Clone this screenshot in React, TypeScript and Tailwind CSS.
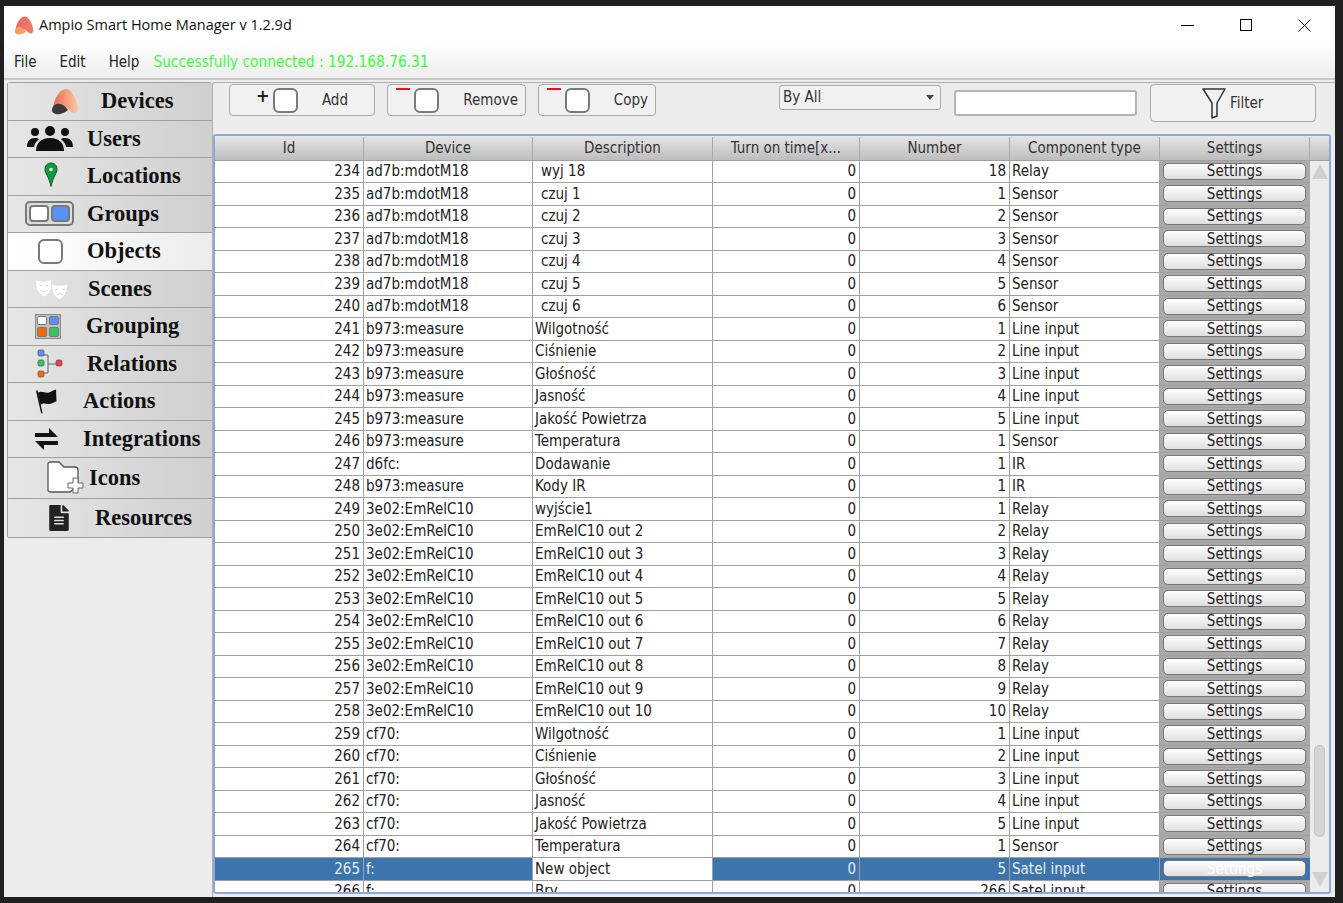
import { FaFileAlt } from "react-icons/fa";

type Row = { id: number; device: string; desc: string; num: number; type: string };

const mk = (id: number, device: string, desc: string, num: number, type: string): Row => ({ id, device, desc, num, type });

const rows: Row[] = [
  mk(234, "ad7b:mdotM18", " wyj 18", 18, "Relay"),
  mk(235, "ad7b:mdotM18", " czuj 1", 1, "Sensor"),
  mk(236, "ad7b:mdotM18", " czuj 2", 2, "Sensor"),
  mk(237, "ad7b:mdotM18", " czuj 3", 3, "Sensor"),
  mk(238, "ad7b:mdotM18", " czuj 4", 4, "Sensor"),
  mk(239, "ad7b:mdotM18", " czuj 5", 5, "Sensor"),
  mk(240, "ad7b:mdotM18", " czuj 6", 6, "Sensor"),
  mk(241, "b973:measure", "Wilgotność", 1, "Line input"),
  mk(242, "b973:measure", "Ciśnienie", 2, "Line input"),
  mk(243, "b973:measure", "Głośność", 3, "Line input"),
  mk(244, "b973:measure", "Jasność", 4, "Line input"),
  mk(245, "b973:measure", "Jakość Powietrza", 5, "Line input"),
  mk(246, "b973:measure", "Temperatura", 1, "Sensor"),
  mk(247, "d6fc:", "Dodawanie", 1, "IR"),
  mk(248, "b973:measure", "Kody IR", 1, "IR"),
  mk(249, "3e02:EmRelC10", "wyjście1", 1, "Relay"),
  mk(250, "3e02:EmRelC10", "EmRelC10 out 2", 2, "Relay"),
  mk(251, "3e02:EmRelC10", "EmRelC10 out 3", 3, "Relay"),
  mk(252, "3e02:EmRelC10", "EmRelC10 out 4", 4, "Relay"),
  mk(253, "3e02:EmRelC10", "EmRelC10 out 5", 5, "Relay"),
  mk(254, "3e02:EmRelC10", "EmRelC10 out 6", 6, "Relay"),
  mk(255, "3e02:EmRelC10", "EmRelC10 out 7", 7, "Relay"),
  mk(256, "3e02:EmRelC10", "EmRelC10 out 8", 8, "Relay"),
  mk(257, "3e02:EmRelC10", "EmRelC10 out 9", 9, "Relay"),
  mk(258, "3e02:EmRelC10", "EmRelC10 out 10", 10, "Relay"),
  mk(259, "cf70:", "Wilgotność", 1, "Line input"),
  mk(260, "cf70:", "Ciśnienie", 2, "Line input"),
  mk(261, "cf70:", "Głośność", 3, "Line input"),
  mk(262, "cf70:", "Jasność", 4, "Line input"),
  mk(263, "cf70:", "Jakość Powietrza", 5, "Line input"),
  mk(264, "cf70:", "Temperatura", 1, "Sensor"),
  mk(265, "f:", "New object", 5, "Satel input"),
  mk(266, "f:", "Bry", 266, "Satel input"),
];

const AmpioLogo = ({ size, dark }: { size: number; dark?: boolean }) => (
  <svg width={size} height={size} viewBox="0 0 28 28">
    <defs>
      <linearGradient id={dark ? "lgA" : "lgB"} x1="0" x2="1" y1="0" y2="0">
        <stop offset="0" stopColor={dark ? "#ea6a55" : "#ee6a5c"} />
        <stop offset="1" stopColor={dark ? "#fbc9a0" : "#ef7a6c"} />
      </linearGradient>
    </defs>
    <path d="M2 22C3 11 9 2 15 2c6 0 11 11 12 19 .4 4-3 6-6 4-3-2-6-6-10-6-4 0-8 7-9 3z" fill={dark ? "url(#lgA)" : "url(#lgB)"} />
    <path d="M1 23c0-4 4-7 8-6 3 .6 6 3 8 6-2 2-5 3-8 4-4 1-8-1-8-4z" fill={dark ? "#3a3a3c" : "#f6a25e"} />
  </svg>
);

const Square = () => (
  <span className="block w-[25px] h-[25px] bg-white border-2 border-[#77797b] rounded-[6px] shrink-0" />
);

const UsersIcon = () => (
  <svg width="46" height="25" viewBox="0 0 46 25">
    <circle cx="8" cy="6" r="4" fill="#111" />
    <circle cx="23" cy="5" r="5" fill="#111" />
    <circle cx="38" cy="6" r="4" fill="#111" />
    <path d="M0 21c0-6 3-9 8-9 2 0 3 .5 4 1.300-3 2-4.500 4.700-5 7.700z" fill="#111" />
    <path d="M46 21c0-6-3-9-8-9-2 0-3 .5-4 1.300 3 2 4.500 4.700 5 7.700z" fill="#111" />
    <path d="M9 25c0-8 5-13 14-13s14 5 14 13z" fill="#111" />
  </svg>
);

const Pin = () => (
  <svg width="14" height="28" viewBox="0 0 14 28">
    <path d="M7 1C3 1 1 4 1 7.500c0 4 4 7 6 17 2-10 6-13 6-17C13 4 11 1 7 1z" fill="#129a3c" stroke="#0b5a24" strokeWidth="1" />
    <circle cx="7" cy="7.500" r="1.800" fill="#e8f5ea" />
  </svg>
);

const GroupsIcon = () => (
  <span className="flex gap-[2px] w-[49px] h-[25px] p-[2px] bg-[#dcdcdc] border-2 border-[#77797b] rounded-[5px]">
    <span className="flex-1 bg-white border-2 border-[#77797b] rounded-[4px]" />
    <span className="flex-1 bg-[#5b8ff9] border-2 border-[#77797b] rounded-[4px]" />
  </span>
);

const MasksIcon = () => (
  <svg width="31" height="20" viewBox="0 0 31 20">
    <path d="M0 1.500c4 1.500 10 1.500 15 0 .5 6 0 13-7 16C2 15 0 8 0 1.500z" fill="#fff" />
    <path d="M16 6c4 1 10 1 15 0 0 6-2 11-7 14-6-2-8-8-8-14z" fill="#fff" />
    <path d="M3.500 6.500l3 .5M9 7l3-.5M4.500 11c2 2.500 4 2.500 6 0" fill="none" stroke="#d8d8d8" strokeWidth="1.200" />
    <path d="M19 10.500l3 .5M26 11l3-.5M21 16c2-2 4-2 6 0" fill="none" stroke="#d8d8d8" strokeWidth="1.200" />
  </svg>
);

const GroupingIcon = () => (
  <span className="grid grid-cols-2 gap-[2px] w-[26px] h-[25px] p-[1px] bg-[#c0c0c0] border border-[#8a8a8a]">
    <span className="bg-white border border-[#777] rounded-[2px]" />
    <span className="bg-[#5b8ff9] border border-[#777] rounded-[2px]" />
    <span className="bg-[#f26a0c] border border-[#777] rounded-[2px]" />
    <span className="bg-[#2fc765] border border-[#777] rounded-[2px]" />
  </span>
);

const RelationsIcon = () => (
  <svg width="26" height="30" viewBox="0 0 26 30">
    <path d="M7 6h4v18H7M11 15h9" fill="none" stroke="#666" strokeWidth="1" />
    <rect x="1" y="1" width="6" height="6" rx="1.500" fill="#5b8ff9" stroke="#555" strokeWidth=".7" />
    <rect x="1" y="11" width="6" height="6" rx="1.500" fill="#2fc765" stroke="#555" strokeWidth=".7" />
    <rect x="1" y="22" width="6" height="6" rx="1.500" fill="#f26a0c" stroke="#555" strokeWidth=".7" />
    <rect x="19" y="11" width="6" height="6" rx="1.500" fill="#e9404c" stroke="#555" strokeWidth=".7" />
  </svg>
);

const FlagIcon = () => (
  <svg width="22" height="26" viewBox="0 0 22 26">
    <path d="M1 3l1.500-1 5 23-1.300.6z" fill="#111" />
    <path d="M3 5c4-3 7 1 11-.5 2.500-1 5-2.500 7-3l.5 12c-3 .5-5 3-9 2.500-3-.4-4.500-1-7 1z" fill="#111" />
  </svg>
);

const SwapIcon = () => (
  <svg width="23" height="22" viewBox="0 0 23 22">
    <path d="M0 5h14V0l9 9H0z" fill="#111" />
    <path d="M23 17H9v5L0 13h23z" fill="#111" />
  </svg>
);

const FolderPlus = () => (
  <svg width="37" height="34" viewBox="0 0 37 34">
    <path d="M1 3c0-1 1-2 2-2h9l5 5h11c2 0 3 1 3 3v15l-8 7H3c-1 0-2-1-2-2z" fill="#fff" stroke="#555" strokeWidth="1.300" />
    <path d="M26 17h5v5h5v5h-5v5h-5v-5h-5v-5h5z" fill="#fff" stroke="#666" strokeWidth="1" />
  </svg>
);

const nav = [
  { label: "Devices", icon: <AmpioLogo size={28} dark />, cls: "pl-[43px]", lab: "ml-[22px]" },
  { label: "Users", icon: <UsersIcon />, cls: "pl-[19px]", lab: "ml-[14px]" },
  { label: "Locations", icon: <Pin />, cls: "pl-[36px]", lab: "ml-[29px]" },
  { label: "Groups", icon: <GroupsIcon />, cls: "pl-[17px]", lab: "ml-[13px]" },
  { label: "Objects", icon: <Square />, cls: "pl-[30px]", lab: "ml-[24px]", active: true },
  { label: "Scenes", icon: <MasksIcon />, cls: "pl-[28px]", lab: "ml-[21px]" },
  { label: "Grouping", icon: <GroupingIcon />, cls: "pl-[27px]", lab: "ml-[25px]" },
  { label: "Relations", icon: <RelationsIcon />, cls: "pl-[29px]", lab: "ml-[24px]" },
  { label: "Actions", icon: <FlagIcon />, cls: "pl-[27px]", lab: "ml-[26px]" },
  { label: "Integrations", icon: <SwapIcon />, cls: "pl-[27px]", lab: "ml-[25px]" },
  { label: "Icons", icon: <FolderPlus />, cls: "pl-[39px] h-[41px]", lab: "ml-[5px]" },
  { label: "Resources", icon: <FaFileAlt size={26} color="#222" />, cls: "pl-[38px] h-[39px]", lab: "ml-[23px]" },
];

const cols = ["w-[149px]", "w-[169px]", "w-[180px]", "w-[147px]", "w-[150px]", "w-[150px]", "w-[150px]"];
const headers = ["Id", "Device", "Description", "Turn on time[x...", "Number", "Component type", "Settings"];

const ToolBtn = ({ label, plus, cls, lab, textCls }: { label: string; plus?: boolean; cls: string; lab: string; textCls: string }) => (
  <button className={"relative h-[32px] flex items-center bg-[#f1f1f1] border border-[#a9a9a9] rounded-[4px] text-[15px] text-[#333] " + cls}>
    {plus ? (
      <span className="absolute left-[26px] top-[-1px] text-[18px] font-bold text-[#222] leading-[24px]">+</span>
    ) : (
      <span className="absolute left-[8px] top-[3px] w-[14px] h-[2px] bg-[#f01010]" />
    )}
    <span className={lab}>
      <Square />
    </span>
    <span className={"ml-auto " + textCls}>{label}</span>
  </button>
);

const TableRow = ({ r }: { r: Row }) => {
  const sel = r.id === 265;
  const base = "h-full flex items-center border-r border-[#a0a0a0] overflow-hidden whitespace-pre ";
  const fill = sel ? "bg-[#3c74ad] text-[#e8eef5] " : "bg-white ";
  const indented = r.desc.startsWith(" ");
  return (
    <div className="flex h-[22.5px] shrink-0 border-b border-[#a0a0a0] text-[15px] text-[#222]">
      <div className={base + fill + cols[0] + " justify-end pr-[3px]"}>{r.id}</div>
      <div className={base + fill + cols[1] + " pl-[2px]"}>{r.device}</div>
      <div className={base + "bg-white " + cols[2] + (indented ? " pl-[8px]" : " pl-[2px]")}>{r.desc.trim()}</div>
      <div className={base + fill + cols[3] + " justify-end pr-[3px]"}>0</div>
      <div className={base + fill + cols[4] + " justify-end pr-[3px]"}>{r.num}</div>
      <div className={base + fill + cols[5] + " pl-[2px]"}>{r.type}</div>
      <div className={"h-full flex items-center justify-start pl-[3px] w-[150px] " + (sel ? "bg-[#3c74ad]" : "bg-[#a9a9a9]")}>
        <button className={"w-[143px] h-[17px] flex items-center justify-center rounded-[5px] border border-[#777] bg-gradient-to-b from-white to-[#dedede] " + (sel ? "text-white" : "text-[#222]")}>
          Settings
        </button>
      </div>
    </div>
  );
};

export default function App() {
  return (
    <div className="w-[1343px] h-[903px] bg-[#202020] pt-[6px] pl-[4px] overflow-hidden font-['DejaVu_Sans_Condensed','DejaVu_Sans',sans-serif]">
      <div className="w-[1331px] h-[891px] flex flex-col bg-[#ececec]">
        <div className="h-[38px] bg-white flex items-center shrink-0 pl-[10px]">
          <AmpioLogo size={20} />
          <span className="ml-[5px] text-[14.5px] text-[#111] font-['Open_Sans',sans-serif]">Ampio Smart Home Manager v 1.2.9d</span>
          <div className="ml-auto flex items-center gap-[46px] pr-[24px]">
            <span className="w-[13px] h-[1px] bg-black" />
            <span className="w-[12px] h-[12px] border border-black" />
            <svg width="13" height="13" viewBox="0 0 13 13"><path d="M.5.500l12 12M12.500.500l-12 12" stroke="#111" strokeWidth="1" /></svg>
          </div>
        </div>
        <div className="h-[36px] shrink-0 flex items-center pl-[10px] pt-[2px] bg-gradient-to-b from-white to-[#ececec] border-b-2 border-[#c8c8c8] text-[15px] text-[#222]">
          <span>File</span>
          <span className="ml-[23px]">Edit</span>
          <span className="ml-[23px]">Help</span>
          <span className="ml-[14px] text-[#3dfb3d] text-[15.3px]">Successfully connected : 192.168.76.31</span>
        </div>
        <div className="flex flex-1 min-h-0 pt-[2px] pl-[3px]">
          <div className="w-[205px] shrink-0 flex flex-col self-start border-l border-[#a0a0a0] border-t rounded-[3px]">
            {nav.map((n) => (
              <div
                key={n.label}
                className={
                  "flex items-center shrink-0 border-b border-[#a0a0a0] h-[37.5px] " +
                  (n.active ? "bg-gradient-to-r from-white to-[#ececec] " : "bg-gradient-to-r from-[#e6e6e6] to-[#cfcfcf] ") +
                  n.cls
                }
              >
                {n.icon}
                <span className={"font-['Liberation_Serif',serif] font-bold text-[22.5px] text-[#111] " + n.lab}>{n.label}</span>
              </div>
            ))}
          </div>
          <div className="flex-1 min-w-0 flex flex-col border-t border-l border-[#b0b0b0] rounded-tl-[3px]">
            <div className="h-[50.5px] shrink-0 flex items-start pt-[1px]">
              <ToolBtn label="Add" plus cls="ml-[16px] w-[146px]" lab="ml-[43px]" textCls="pr-[26px]" />
              <ToolBtn label="Remove" cls="ml-[12px] w-[139px]" lab="ml-[26px]" textCls="pr-[7px]" />
              <ToolBtn label="Copy" cls="ml-[12px] w-[118px]" lab="ml-[26px]" textCls="pr-[7px]" />
              <div className="ml-[123px] mt-[1px] w-[162px] h-[25px] pl-[3px] pr-[6px] flex items-center justify-between bg-[#f1f1f1] border border-[#a9a9a9] rounded-[3px] text-[15px] text-[#333]">
                <span>By All</span>
                <span className="w-0 h-0 border-x-[4px] border-x-transparent border-t-[5px] border-t-[#444]" />
              </div>
              <div className="ml-[13px] mt-[6px] w-[183px] h-[26px] bg-white border-2 border-[#b4b4b4] rounded-[3px]" />
              <button className="ml-[13px] w-[166px] h-[38px] flex items-center bg-[#f1f1f1] border border-[#a9a9a9] rounded-[4px] text-[15px] text-[#333] pl-[51px]">
                <svg width="24" height="31" viewBox="0 0 24 31"><path d="M1 1h22L15 15v13l-5 2V15z" fill="none" stroke="#333" strokeWidth="1.500" strokeLinejoin="round" /></svg>
                <span className="ml-[4px]">Filter</span>
              </button>
            </div>
            <div className="w-[1118px] h-[760px] flex flex-col border-2 border-[#8fa9d6] rounded-[3px] bg-white overflow-hidden">
              <div className="h-[25px] shrink-0 flex pt-[1px] bg-gradient-to-b from-[#e6e6e6] to-[#bdbdbd] border-b border-[#a0a0a0] text-[15px] text-[#333]">
                {headers.map((h, i) => (
                  <div key={h} className={"flex items-center justify-center border-r border-[#a9a9a9] " + cols[i]}>{h}</div>
                ))}
              </div>
              <div className="flex flex-1 min-h-0">
                <div className="w-[1095px] shrink-0 flex flex-col overflow-hidden">
                  {rows.map((r) => <TableRow key={r.id} r={r} />)}
                </div>
                <div className="flex-1 flex flex-col items-center bg-[#ececec] pt-[3px] pb-[5px]">
                  <span className="w-0 h-0 border-x-[8px] border-x-transparent border-b-[15px] border-b-[#d0d0d0]" />
                  <span className="mt-[566px] w-[11px] h-[92px] rounded-[5px] bg-[#d4d4d4] border border-[#c4c4c4]" />
                  <span className="mt-auto w-0 h-0 border-x-[8px] border-x-transparent border-t-[15px] border-t-[#d0d0d0]" />
                </div>
              </div>
            </div>
          </div>
        </div>
      </div>
    </div>
  );
}
